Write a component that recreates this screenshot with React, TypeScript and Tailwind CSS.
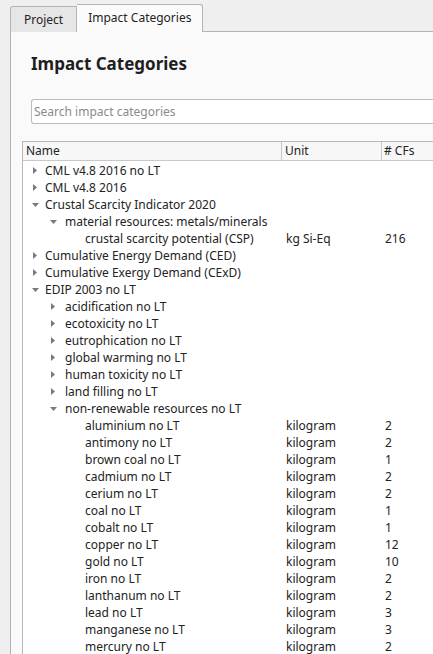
import React from "react";

type Row = { label: string; depth: number; arrow?: "right" | "down"; unit?: string; cfs?: string };

const rows: Row[] = [
  { label: "CML v4.8 2016 no LT", depth: 0, arrow: "right" },
  { label: "CML v4.8 2016", depth: 0, arrow: "right" },
  { label: "Crustal Scarcity Indicator 2020", depth: 0, arrow: "down" },
  { label: "material resources: metals/minerals", depth: 1, arrow: "down" },
  { label: "crustal scarcity potential (CSP)", depth: 2, unit: "kg Si-Eq", cfs: "216" },
  { label: "Cumulative Energy Demand (CED)", depth: 0, arrow: "right" },
  { label: "Cumulative Exergy Demand (CExD)", depth: 0, arrow: "right" },
  { label: "EDIP 2003 no LT", depth: 0, arrow: "down" },
  { label: "acidification no LT", depth: 1, arrow: "right" },
  { label: "ecotoxicity no LT", depth: 1, arrow: "right" },
  { label: "eutrophication no LT", depth: 1, arrow: "right" },
  { label: "global warming no LT", depth: 1, arrow: "right" },
  { label: "human toxicity no LT", depth: 1, arrow: "right" },
  { label: "land filling no LT", depth: 1, arrow: "right" },
  { label: "non-renewable resources no LT", depth: 1, arrow: "down" },
  { label: "aluminium no LT", depth: 2, unit: "kilogram", cfs: "2" },
  { label: "antimony no LT", depth: 2, unit: "kilogram", cfs: "2" },
  { label: "brown coal no LT", depth: 2, unit: "kilogram", cfs: "1" },
  { label: "cadmium no LT", depth: 2, unit: "kilogram", cfs: "2" },
  { label: "cerium no LT", depth: 2, unit: "kilogram", cfs: "2" },
  { label: "coal no LT", depth: 2, unit: "kilogram", cfs: "1" },
  { label: "cobalt no LT", depth: 2, unit: "kilogram", cfs: "1" },
  { label: "copper no LT", depth: 2, unit: "kilogram", cfs: "12" },
  { label: "gold no LT", depth: 2, unit: "kilogram", cfs: "10" },
  { label: "iron no LT", depth: 2, unit: "kilogram", cfs: "2" },
  { label: "lanthanum no LT", depth: 2, unit: "kilogram", cfs: "2" },
  { label: "lead no LT", depth: 2, unit: "kilogram", cfs: "3" },
  { label: "manganese no LT", depth: 2, unit: "kilogram", cfs: "3" },
  { label: "mercury no LT", depth: 2, unit: "kilogram", cfs: "2" },
];

const indent = ["pl-[9px]", "pl-[27px]", "pl-[62px]"];

function Arrow({ dir }: { dir: "right" | "down" }) {
  return (
    <span className="w-[13px] flex items-center justify-start shrink-0">
      {dir === "right" ? (
        <svg width="4" height="7" viewBox="0 0 4 7" className="ml-[1px]">
          <path d="M0 0 L4 3.5 L0 7 Z" fill="#7a7a7a" />
        </svg>
      ) : (
        <svg width="7" height="4" viewBox="0 0 7 4">
          <path d="M0 0 L7 0 L3.5 4 Z" fill="#7a7a7a" />
        </svg>
      )}
    </span>
  );
}

export default function App() {
  return (
    <div
      className="w-[433px] h-[654px] overflow-hidden bg-[#efefef] text-[12px] text-[#232323] flex flex-col"
      style={{ fontFamily: '"Noto Sans", sans-serif' }}
    >
      {/* Tabs */}
      <div className="flex items-end h-[32px] pl-[10px] shrink-0">
        <div className="h-[26px] px-[13px] flex items-center bg-[#e6e6e6] border border-b-0 border-[#b4b4b4] rounded-tl-[3px]">
          Project
        </div>
        <div className="h-[28px] px-[11px] pb-[2px] flex items-center bg-[#fbfbfb] border border-b-0 border-l-0 border-[#b4b4b4] rounded-tr-[3px]">
          Impact Categories
        </div>
        <div className="flex-1 h-full border-b border-[#b4b4b4]" />
      </div>

      {/* Panel */}
      <div className="flex-1 ml-[10px] bg-[#fafafa] border-l border-[#b4b4b4] flex flex-col min-h-0">
        <div className="pl-[20px] pt-[21px] text-[17px] font-bold text-[#1e1e1e] leading-[22px]">
          Impact Categories
        </div>
        <div className="ml-[20px] mt-[24px] h-[25px] bg-white border border-[#bcbcbc] rounded-l-[3px] border-r-0 flex items-center pl-[2px] text-[#8a8a8a]">
          Search impact categories
        </div>

        {/* Tree */}
        <div className="ml-[11px] mt-[17px] flex-1 bg-white border-l border-t border-[#b8b8b8] flex flex-col min-h-0">
          <div className="flex h-[19px] bg-[#f7f7f7] border-b border-[#c8c8c8] shrink-0 leading-[18px]">
            <div className="w-[259px] pl-[3px] border-r border-[#c8c8c8]">Name</div>
            <div className="w-[100px] pl-[3px] border-r border-[#c8c8c8]">Unit</div>
            <div className="flex-1 pl-[2px]"># CFs</div>
          </div>
          <div className="pt-[1px]">
            {rows.map((r, i) => (
              <div key={i} className="flex h-[17px] items-center leading-[17px]">
                <div className={`w-[259px] flex items-center ${indent[r.depth]}`}>
                  {r.arrow ? <Arrow dir={r.arrow} /> : null}
                  <span className={r.depth === 1 ? "pl-[2px] whitespace-nowrap" : "whitespace-nowrap"}>
                    {r.label}
                  </span>
                </div>
                <div className="w-[100px] pl-[4px]">{r.unit}</div>
                <div className="flex-1 pl-[3px]">{r.cfs}</div>
              </div>
            ))}
          </div>
        </div>
      </div>
    </div>
  );
}
